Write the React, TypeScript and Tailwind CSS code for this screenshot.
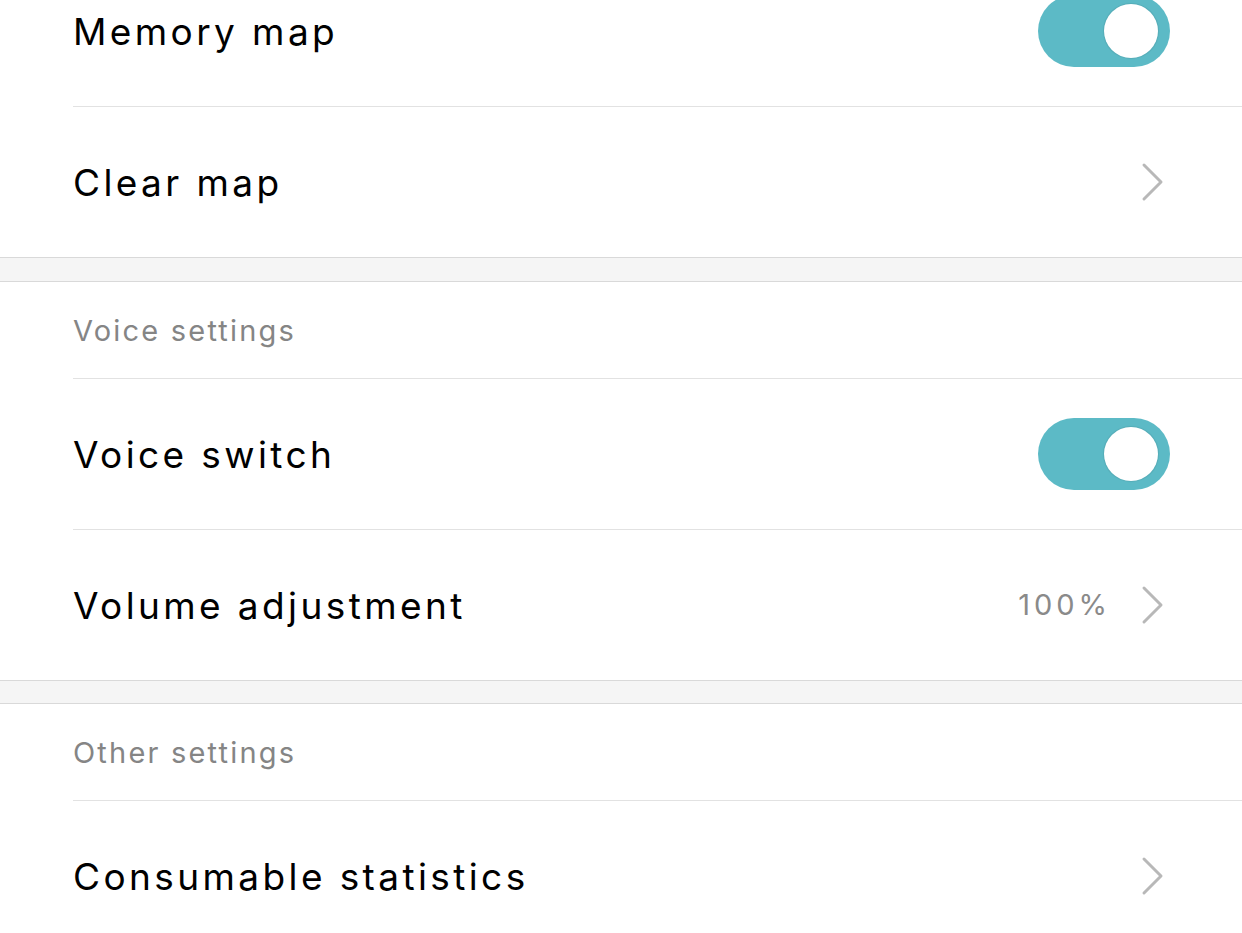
import React from "react";

const Chevron = () => (
  <svg width="26" height="42" viewBox="0 0 26 42" className="block">
    <polyline points="4,4 21,21 4,38" fill="none" stroke="#b8b8b8" strokeWidth="3" strokeLinecap="round" strokeLinejoin="round" />
  </svg>
);

const Toggle = () => (
  <div className="relative w-[132px] h-[72px] rounded-full bg-[#5cbac6] mr-[72px]">
    <div className="absolute right-[12px] top-[9px] w-[54px] h-[54px] rounded-full bg-white shadow-[0_0_1px_1px_rgba(0,0,0,0.08)]" />
  </div>
);

const Row = ({ label, right, border = true, h = "h-[150px]" }: { label: string; right: React.ReactNode; border?: boolean; h?: string }) => (
  <div className={`flex items-center justify-between ${h} ${border ? "border-b border-[#e2e2e2]" : ""}`}>
    <span className="text-[37px] tracking-[3.4px] text-black leading-none">{label}</span>
    {right}
  </div>
);

const ChevronRight = ({ value }: { value?: string }) => (
  <div className="flex items-center mr-[76px]">
    {value && <span className="text-[29px] tracking-[4px] text-[#8a8a8a] mr-[29px]">{value}</span>}
    <Chevron />
  </div>
);

const Header = ({ label }: { label: string }) => (
  <div className="h-[97px] flex items-center border-b border-[#e2e2e2]">
    <span className="text-[29px] tracking-[2.2px] text-[#858585] leading-none">{label}</span>
  </div>
);

const Band = ({ h }: { h: string }) => (
  <div className={`${h} bg-[#f5f5f5] border-y border-[#d9d9d9]`} />
);

export default function App() {
  return (
    <div className="w-[1242px] h-[933px] overflow-hidden bg-white" style={{ fontFamily: "Inter, 'Noto Sans', sans-serif" }}>
      <div className="pl-[73px] mt-[-44px]">
        <Row label="Memory map" right={<Toggle />} h="h-[151px]" />
        <Row label="Clear map" right={<ChevronRight />} border={false} />
      </div>
      <Band h="h-[25px]" />
      <div className="pl-[73px]">
        <Header label="Voice settings" />
        <Row label="Voice switch" right={<Toggle />} h="h-[151px]" />
        <Row label="Volume adjustment" right={<ChevronRight value="100%" />} border={false} />
      </div>
      <Band h="h-[24px]" />
      <div className="pl-[73px]">
        <Header label="Other settings" />
        <Row label="Consumable statistics" right={<ChevronRight />} h="h-[151px]" />
      </div>
    </div>
  );
}
